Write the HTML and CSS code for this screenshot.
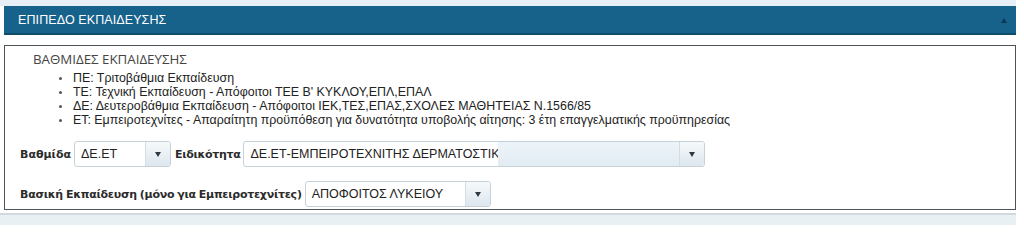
FILE: index.html
```html
<!DOCTYPE html>
<html lang="el">
<head>
<meta charset="utf-8">
<title>Επίπεδο Εκπαίδευσης</title>
<link rel="stylesheet" href="styles.css">
</head>
<body>
<div class="page">
  <div class="top-strip"></div>
  <div class="panel">
    <div class="panel-head">
      <span class="panel-title">ΕΠΙΠΕΔΟ ΕΚΠΑΙΔΕΥΣΗΣ</span>
      <span class="caret-up"></span>
    </div>
    <div class="panel-body">
      <div class="box">
        <div class="box-title">ΒΑΘΜΙΔΕΣ ΕΚΠΑΙΔΕΥΣΗΣ</div>
        <ul class="levels">
          <li>ΠΕ: Τριτοβάθμια Εκπαίδευση</li>
          <li>ΤΕ: Τεχνική Εκπαίδευση - Απόφοιτοι ΤΕΕ Β' ΚΥΚΛΟΥ,ΕΠΛ,ΕΠΑΛ</li>
          <li>ΔΕ: Δευτεροβάθμια Εκπαίδευση - Απόφοιτοι ΙΕΚ,ΤΕΣ,ΕΠΑΣ,ΣΧΟΛΕΣ ΜΑΘΗΤΕΙΑΣ Ν.1566/85</li>
          <li>ΕΤ: Εμπειροτεχνίτες - Απαραίτητη προϋπόθεση για δυνατότητα υποβολής αίτησης: 3 έτη επαγγελματικής προϋπηρεσίας</li>
        </ul>
        <div class="form-row row-first">
          <span class="label">Βαθμίδα</span>
          <div class="select sel-level">
            <span class="sel-text">ΔΕ.ΕΤ</span>
            <span class="sel-arrow"><span class="tri"></span></span>
          </div>
          <span class="label label-spec">Ειδικότητα</span>
          <div class="select sel-spec">
            <span class="sel-text clipped">ΔΕ.ΕΤ-ΕΜΠΕΙΡΟΤΕΧΝΙΤΗΣ ΔΕΡΜΑΤΟΣΤΙΚΗΣ</span>
            <span class="sel-fill"></span>
            <span class="sel-arrow"><span class="tri"></span></span>
          </div>
        </div>
        <div class="form-row row-second">
          <span class="label label-long">Βασική Εκπαίδευση (μόνο για Εμπειροτεχνίτες)</span>
          <div class="select sel-basic">
            <span class="sel-text">ΑΠΟΦΟΙΤΟΣ ΛΥΚΕΙΟΥ</span>
            <span class="sel-arrow"><span class="tri"></span></span>
          </div>
        </div>
      </div>
    </div>
  </div>
  <div class="bottom-strip"></div>
</div>
</body>
</html>
```

FILE: styles.css
```css
html, body {
  margin: 0;
  padding: 0;
  background: #ffffff;
}

.page {
  width: 1016px;
  font-family: "Liberation Sans", Arial, sans-serif;
  color: #222;
}

.top-strip {
  height: 6px;
  background: #e6eff6;
}

.panel {
  margin-left: 4px;
}

.panel-head {
  height: 27px;
  background: #17628b;
  border-bottom: 2px solid #0f4d6e;
  display: flex;
  align-items: center;
  justify-content: space-between;
  padding: 0 9px 0 14px;
}

.panel-title {
  color: #ffffff;
  font-size: 12.5px;
  letter-spacing: 0.1px;
}

.caret-up {
  width: 0;
  height: 0;
  border-left: 3px solid transparent;
  border-right: 3px solid transparent;
  border-bottom: 5px solid #0b3a56;
  margin-top: 2px;
}

.panel-body {
  padding-top: 10px;
}

.box {
  border: 1px solid #4c5559;
  height: 165px;
  box-sizing: border-box;
  padding: 5px 0 0 15px;
}

.box-title {
  font-family: "Open Sans", "Liberation Sans", sans-serif;
  font-size: 13.3px;
  color: #444;
  padding-left: 13px;
  line-height: 17px;
}

.levels {
  margin: 3px 0 0 0;
  padding: 0 0 0 53px;
  list-style: none;
  font-size: 12.4px;
  line-height: 14px;
  color: #222;
}

.levels li {
  position: relative;
}

.levels li::before {
  content: "";
  position: absolute;
  left: -14px;
  top: 6px;
  width: 3px;
  height: 3px;
  background: #555;
  border-radius: 50%;
}

.form-row {
  display: flex;
  align-items: center;
  gap: 3px;
}

.row-first {
  margin-top: 14px;
}

.row-second {
  margin-top: 14px;
}

.label {
  font-family: "DejaVu Sans", Verdana, sans-serif;
  font-weight: bold;
  font-size: 11px;
  color: #2b2b2b;
}

.label-spec {
  letter-spacing: -0.3px;
}

.label-long {
  letter-spacing: -0.25px;
  word-spacing: -0.6px;
}

.label + .select {
  margin-left: 0;
}

.select + .label {
  margin-left: 1px;
}

.select {
  height: 26px;
  box-sizing: border-box;
  border: 1px solid #c6d1d8;
  border-radius: 3px;
  background: #ffffff;
  display: flex;
  align-items: stretch;
  overflow: hidden;
}

.sel-text {
  font-size: 12.5px;
  color: #222;
  padding-left: 6px;
  display: flex;
  align-items: center;
  flex: 1;
  white-space: nowrap;
  overflow: hidden;
}

.sel-text.clipped {
  flex: 0 0 248px;
}

.sel-fill {
  flex: 1;
  background: linear-gradient(#edf4f9, #e2ecf3);
}

.sel-arrow {
  width: 24px;
  border-left: 1px solid #d3dde3;
  background: linear-gradient(#f6f9fb, #dde7ee);
  display: flex;
  align-items: center;
  justify-content: center;
}

.tri {
  width: 0;
  height: 0;
  border-left: 3px solid transparent;
  border-right: 3px solid transparent;
  border-top: 5px solid #2e3a42;
}

.sel-level {
  width: 97px;
}

.sel-spec {
  width: 462px;
}

.sel-basic {
  width: 186px;
}

.bottom-strip {
  margin-top: 3px;
  height: 10px;
  border-top: 2px solid #cfd9de;
  background: #e8f0f4;
}
```
